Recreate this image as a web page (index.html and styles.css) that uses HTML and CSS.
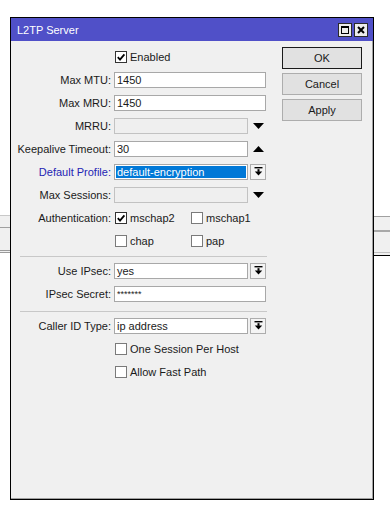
FILE: index.html
```html
<!DOCTYPE html>
<html>
<head>
<meta charset="utf-8">
<link rel="stylesheet" href="styles.css">
</head>
<body>
<div class="desk">
  <div class="bg bg-left"></div>
  <div class="bg bg-right"></div>
  <div class="win">
    <div class="titlebar">
      <span class="title">L2TP Server</span>
      <div class="tbtns">
        <span class="tbtn"><span class="maxicon"></span></span>
        <span class="tbtn"><svg width="8" height="8" viewBox="0 0 8 8"><path d="M1 1L7 7M7 1L1 7" stroke="#000" stroke-width="2"/></svg></span>
      </div>
    </div>
    <div class="body">
      <div class="form">
        <div class="row">
          <span class="lbl"></span>
          <div class="field"><span class="chk"><span class="box on"><svg width="10" height="10" viewBox="0 0 10 10"><path d="M1.8 5.2L4 7.6L8.4 2.4" fill="none" stroke="#000" stroke-width="1.8"/></svg></span>Enabled</span></div>
        </div>
        <div class="row">
          <span class="lbl">Max MTU:</span>
          <div class="field"><span class="inp full">1450</span></div>
        </div>
        <div class="row">
          <span class="lbl">Max MRU:</span>
          <div class="field"><span class="inp full">1450</span></div>
        </div>
        <div class="row">
          <span class="lbl">MRRU:</span>
          <div class="field"><span class="inp short dis"></span><span class="tri"><svg width="11" height="6" viewBox="0 0 11 6"><path d="M0 0H11L5.5 6Z"/></svg></span></div>
        </div>
        <div class="row">
          <span class="lbl">Keepalive Timeout:</span>
          <div class="field"><span class="inp short">30</span><span class="tri"><svg width="11" height="6" viewBox="0 0 11 6"><path d="M0 6H11L5.5 0Z"/></svg></span></div>
        </div>
        <div class="row">
          <span class="lbl blue">Default Profile:</span>
          <div class="field"><span class="inp short sel"><span class="hl">default-encryption</span></span><span class="ddbtn"><svg width="9" height="9" viewBox="0 0 9 9"><rect x="0.5" y="0" width="8" height="1.4"/><rect x="3.5" y="2.2" width="2" height="2.6"/><path d="M0.8 4.4H8.2L4.5 8.6Z"/></svg></span></div>
        </div>
        <div class="row">
          <span class="lbl">Max Sessions:</span>
          <div class="field"><span class="inp short dis"></span><span class="tri"><svg width="11" height="6" viewBox="0 0 11 6"><path d="M0 0H11L5.5 6Z"/></svg></span></div>
        </div>
        <div class="row">
          <span class="lbl">Authentication:</span>
          <div class="field">
            <span class="chk col"><span class="box on"><svg width="10" height="10" viewBox="0 0 10 10"><path d="M1.8 5.2L4 7.6L8.4 2.4" fill="none" stroke="#000" stroke-width="1.8"/></svg></span>mschap2</span>
            <span class="chk"><span class="box"></span>mschap1</span>
          </div>
        </div>
        <div class="row">
          <span class="lbl"></span>
          <div class="field">
            <span class="chk col"><span class="box"></span>chap</span>
            <span class="chk"><span class="box"></span>pap</span>
          </div>
        </div>
        <div class="sep sep1"></div>
        <div class="row">
          <span class="lbl">Use IPsec:</span>
          <div class="field"><span class="inp short">yes</span><span class="ddbtn"><svg width="9" height="9" viewBox="0 0 9 9"><rect x="0.5" y="0" width="8" height="1.4"/><rect x="3.5" y="2.2" width="2" height="2.6"/><path d="M0.8 4.4H8.2L4.5 8.6Z"/></svg></span></div>
        </div>
        <div class="row">
          <span class="lbl">IPsec Secret:</span>
          <div class="field"><span class="inp full pw">*******</span></div>
        </div>
        <div class="sep sep2"></div>
        <div class="row">
          <span class="lbl">Caller ID Type:</span>
          <div class="field"><span class="inp short">ip address</span><span class="ddbtn"><svg width="9" height="9" viewBox="0 0 9 9"><rect x="0.5" y="0" width="8" height="1.4"/><rect x="3.5" y="2.2" width="2" height="2.6"/><path d="M0.8 4.4H8.2L4.5 8.6Z"/></svg></span></div>
        </div>
        <div class="row">
          <span class="lbl"></span>
          <div class="field"><span class="chk"><span class="box"></span>One Session Per Host</span></div>
        </div>
        <div class="row">
          <span class="lbl"></span>
          <div class="field"><span class="chk"><span class="box"></span>Allow Fast Path</span></div>
        </div>
      </div>
      <div class="actions">
        <button class="btn def">OK</button>
        <button class="btn">Cancel</button>
        <button class="btn">Apply</button>
      </div>
    </div>
  </div>
</div>
</body>
</html>
```
FILE: styles.css
```css
html, body {
  margin: 0;
  padding: 0;
  background: #ffffff;
}
body {
  font-family: "Liberation Sans", Arial, sans-serif;
  font-size: 11px;
  color: #1a1a1a;
}
.desk {
  position: relative;
  width: 390px;
  height: 508px;
  padding: 17px 0 0 10px;
  box-sizing: border-box;
}
.bg {
  position: absolute;
  box-sizing: border-box;
  background: #f0f0f0;
}
.bg-left {
  left: 0;
  top: 215px;
  width: 10px;
  height: 38px;
  border-top: 1px solid #c8c8c8;
  border-bottom: 3px double #9a9a9a;
}
.bg-left::before {
  content: "";
  position: absolute;
  left: 0;
  right: 0;
  top: 11px;
  height: 1px;
  background: #a0a0a0;
}
.bg-right {
  left: 374px;
  top: 216px;
  width: 16px;
  height: 40px;
  border-top: 1px solid #a0a0a0;
  border-bottom: 1px solid #000;
}
.bg-right::before {
  content: "";
  position: absolute;
  left: 0;
  right: 0;
  top: 13px;
  height: 2px;
  background: #a8a8a8;
}
.bg-right::after {
  content: "";
  position: absolute;
  left: 0;
  right: 0;
  top: 35px;
  height: 1px;
  background: #c0c0c0;
}
.win {
  position: relative;
  width: 364px;
  height: 483px;
  border: 1px solid #000;
  box-sizing: border-box;
  display: flex;
  flex-direction: column;
  background: #f0f0f0;
}
.titlebar {
  height: 23px;
  background: #5050c8;
  display: flex;
  align-items: center;
  justify-content: space-between;
  padding: 0 5px 0 6px;
  color: #fff;
}
.title {
  font-size: 11px;
  padding-top: 1px;
}
.tbtns {
  display: flex;
  gap: 2px;
  padding-top: 1px;
}
.tbtn {
  width: 14px;
  height: 14px;
  box-sizing: border-box;
  border: 1px solid #2a2a2a;
  background: #ececec;
  display: flex;
  align-items: center;
  justify-content: center;
}
.maxicon {
  width: 8px;
  height: 8px;
  box-sizing: border-box;
  border: 1px solid #000;
  border-top-width: 2px;
}
.body {
  flex: 1;
  display: flex;
  box-shadow: inset -1px -1px 0 #a0a0a0;
}
.form {
  width: 271px;
  padding-top: 4px;
}
.row {
  height: 23px;
  display: flex;
  align-items: center;
}
.lbl {
  width: 100px;
  text-align: right;
  white-space: nowrap;
  flex: none;
}
.lbl.blue {
  color: #2424b4;
}
.field {
  margin-left: 3px;
  display: flex;
  align-items: center;
}
.inp {
  height: 16px;
  box-sizing: border-box;
  border: 1px solid #a8a8a8;
  background: #fff;
  padding-left: 2px;
  line-height: 14px;
  white-space: nowrap;
  overflow: hidden;
}
.inp.full {
  width: 152px;
}
.inp.short {
  width: 134px;
}
.inp.dis {
  background: #efefef;
  border-color: #c2c2c2;
}
.inp.sel {
  padding: 1px;
  border-color: #a8a8a8;
}
.hl {
  display: block;
  height: 12px;
  line-height: 12px;
  background: #0078d7;
  color: #fff;
  padding-left: 1px;
}
.inp.pw {
  font-size: 9px;
}
.tri {
  width: 16px;
  margin-left: 2px;
  display: flex;
  justify-content: center;
  align-items: center;
}
.ddbtn {
  width: 16px;
  height: 16px;
  margin-left: 2px;
  box-sizing: border-box;
  border: 1px solid #adadad;
  background: #f4f4f4;
  display: flex;
  justify-content: center;
  align-items: center;
}
.chk {
  display: inline-flex;
  align-items: center;
  margin-left: 1px;
}
.chk.col {
  width: 76px;
}
.chk.col + .chk {
  margin-left: 0;
}
.box {
  width: 12px;
  height: 12px;
  box-sizing: border-box;
  border: 1px solid #7a7a7a;
  background: #fff;
  margin-right: 3px;
  display: flex;
  align-items: center;
  justify-content: center;
}
.box.on {
  border-color: #333;
}
.sep {
  box-sizing: border-box;
}
.sep::before {
  content: "";
  display: block;
  margin-left: 9px;
  width: 247px;
  height: 1px;
  background: #c8c8c8;
}
.sep1 {
  height: 7px;
  padding-top: 4px;
}
.sep2 {
  height: 9px;
  padding-top: 6px;
}
.actions {
  width: 80px;
  padding-top: 6px;
  display: flex;
  flex-direction: column;
  gap: 4px;
}
.btn {
  width: 80px;
  height: 22px;
  box-sizing: border-box;
  border: 1px solid #adadad;
  background: #e1e1e1;
  font-family: "Liberation Sans", Arial, sans-serif;
  font-size: 11px;
  color: #1a1a1a;
  padding: 0;
  margin: 0;
}
.btn.def {
  border-color: #1a1a1a;
}
```
